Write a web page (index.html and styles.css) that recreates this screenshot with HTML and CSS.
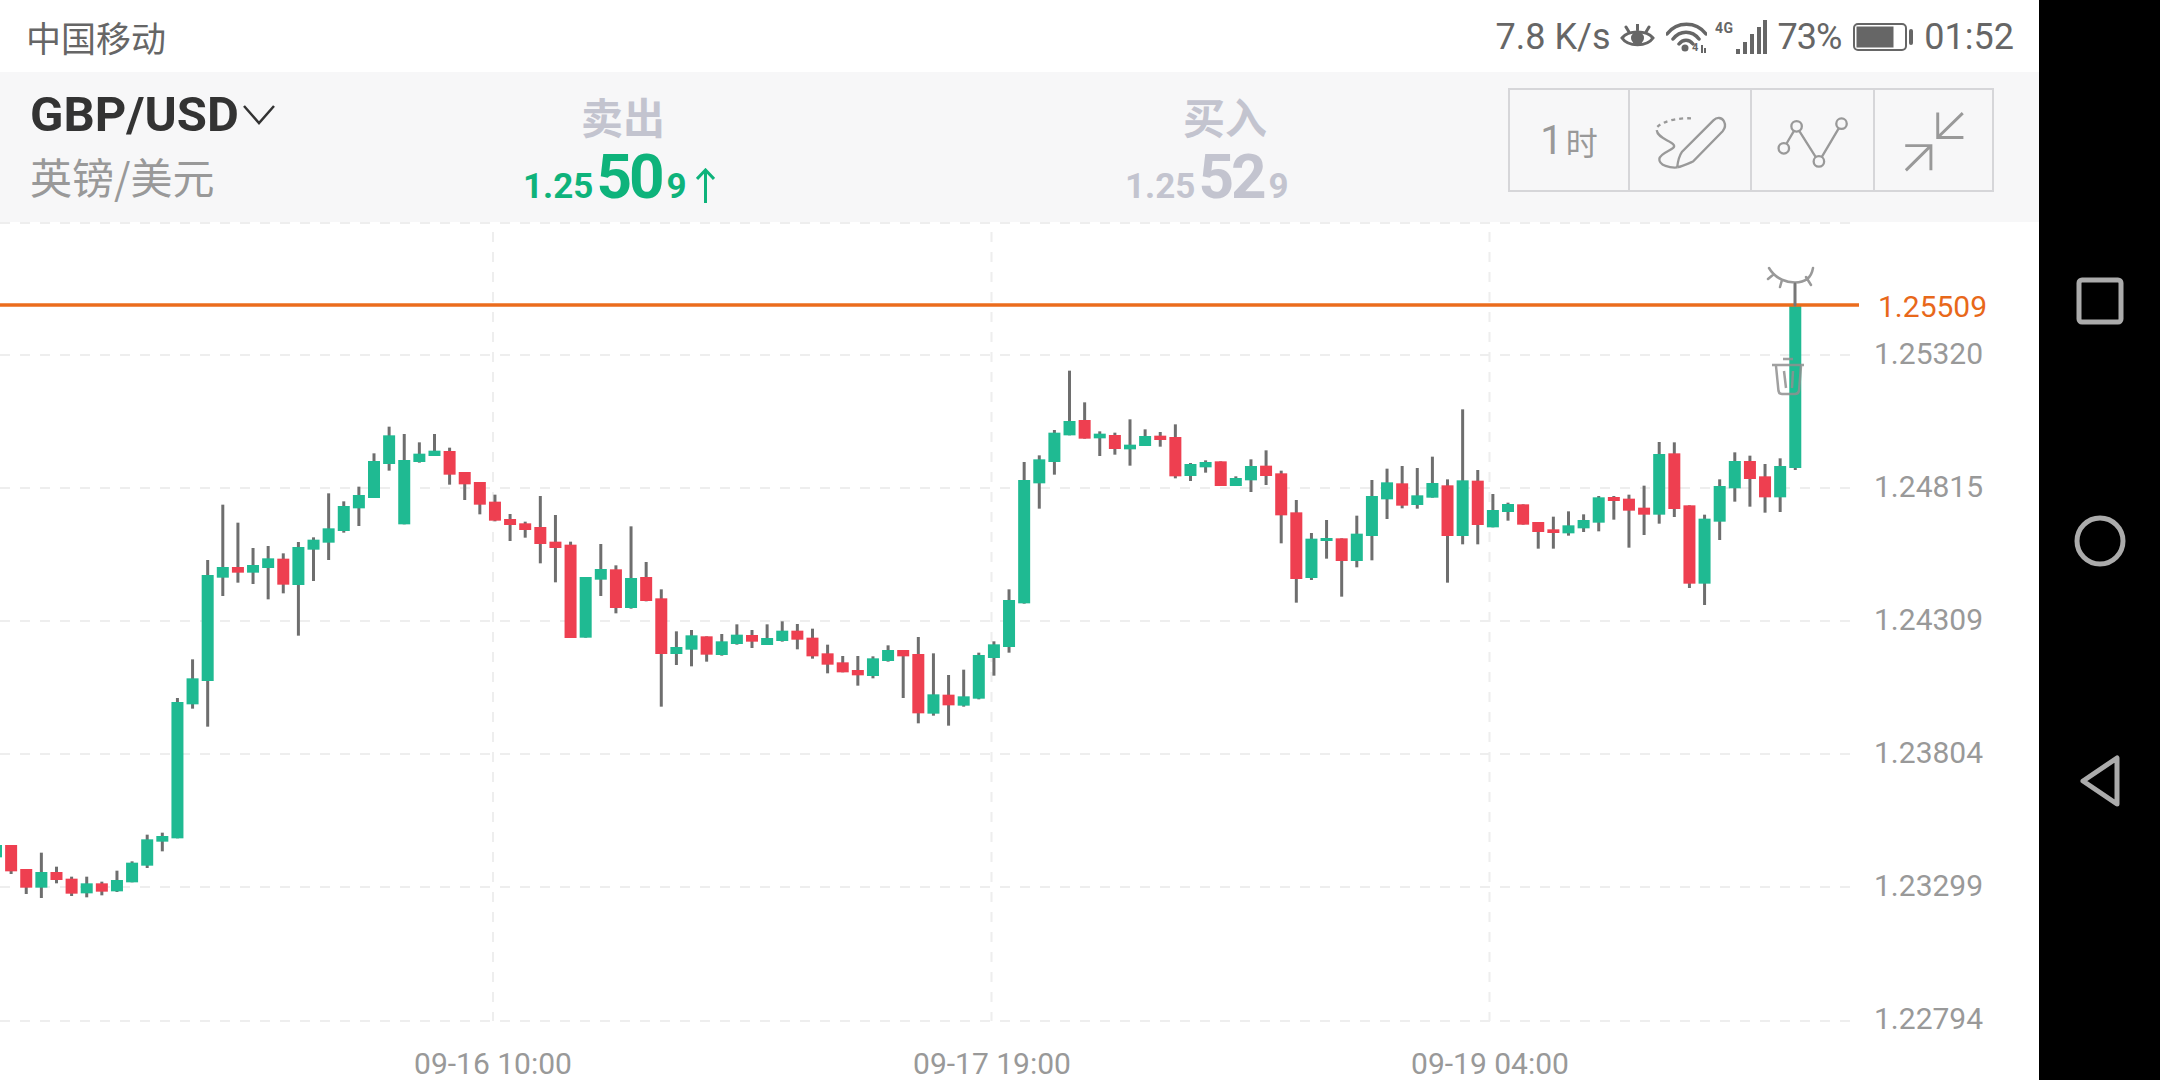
FILE: index.html
```html
<!DOCTYPE html>
<html lang="zh-CN">
<head>
<meta charset="utf-8">
<title>GBP/USD</title>
<link rel="stylesheet" href="styles.css">
</head>
<body>
<div class="phone">
  <main class="screen">
    <header class="status">
      <span class="carrier">中国移动</span>
      <div class="status-right">
        <span class="speed">7.8 K/s</span>
        <svg class="ico-eye" width="35" height="26" viewBox="0 0 35 26"><path class="st" d="M2 14C8 6 27 6 33 14C27 23 8 23 2 14Z"/><circle class="fill" cx="17.500" cy="14" r="6.500"/><path class="st" d="M17.500 0V6M6 3L9 8M29 3L26 8"/></svg>
        <svg class="ico-wifi" width="41" height="32" viewBox="0 0 41 32"><path class="wf" d="M1 13C11 0 30 0 40 13M7 18C14 9 26 9 33 18M13 23C17 18 23 18 27 23"/><circle class="fill" cx="19" cy="27" r="3.500"/><text class="tiny" x="26" y="30">4</text><path class="st-thin" d="M36 32V24M39 32V27"/></svg>
        <svg class="ico-signal" width="53" height="34" viewBox="0 0 53 34"><text class="net" x="0" y="13" textLength="18">4G</text><path class="bars" d="M21 29h4v5h-4zM28 22h4v12h-4zM35 14h4v20h-4zM42 7h4v27h-4zM48 0h4v34h-4z"/></svg>
        <span class="pct">73%</span>
        <svg class="ico-batt" width="61" height="28" viewBox="0 0 61 28"><rect class="batt" x="1" y="1" width="52" height="26" rx="4"/><rect class="fill" x="3.500" y="3.500" width="37" height="21"/><rect class="fill" x="56" y="6" width="4" height="16" rx="2"/></svg>
        <span class="clock">01:52</span>
      </div>
    </header>

    <section class="quotebar">
      <div class="pair">
        <div class="pair-code">GBP/USD<svg class="chev" width="32" height="20" viewBox="0 0 32 20"><path d="M1 1L16 18L31 1"/></svg></div>
        <div class="pair-name">英镑/美元</div>
      </div>
      <div class="quote quote-sell">
        <div class="quote-label">卖出</div>
        <div class="price price-up"><span class="small">1.25</span><span class="big">50</span><span class="small">9</span><svg class="arrow" width="19" height="36" viewBox="0 0 19 36"><path d="M9.500 35V2M1 11L9.500 2L18 11"/></svg></div>
      </div>
      <div class="quote quote-buy">
        <div class="quote-label">买入</div>
        <div class="price price-mute"><span class="small">1.25</span><span class="big">52</span><span class="small">9</span></div>
      </div>
      <div class="tools">
        <div class="tool tool-text"><span class="one">1</span><span class="hour">时</span></div>
        <div class="tool"><svg class="tool-ico" viewBox="387 53 364 309"><path d="M530 288C532 270 538 250 545 240L640 145C650 135 665 135 672 148C678 160 675 170 668 178L578 270C560 278 545 285 530 288"/><path class="dots" d="M572 139C540 137 490 145 470 165"/><path d="M468 175C470 200 510 205 520 220C528 235 480 240 476 262C474 282 510 290 530 288"/></svg></div>
        <div class="tool"><svg class="tool-ico" viewBox="751 53 369 309"><path d="M856 216L879 177M895 177L945 256M964 256L1015 170"/><circle cx="848" cy="230" r="16"/><circle cx="887" cy="163" r="16"/><circle cx="955" cy="270" r="16"/><circle cx="1024" cy="155" r="16"/></svg></div>
        <div class="tool"><svg class="tool-ico tool-ico-bold" viewBox="1120 53 360 309"><path d="M1313 120V197H1392M1313 197L1390 122M1213 222H1292V298M1292 222L1215 298"/></svg></div>
      </div>
    </section>

    <section class="chart">
      <svg id="plot" class="plot" width="2039" height="858" viewBox="0 222 2039 858">
        <g class="grid">
          <path d="M0 223H1850M0 355H1850M0 488H1850M0 621H1850M0 754H1850M0 887H1850M0 1021H1850"/>
          <path d="M493 232V1021M991.500 232V1021M1489.500 232V1021"/>
        </g>
        <g id="candles"></g>
        <path class="last-line" d="M0 305H1859"/>
        <g class="axis">
          <text class="last-label" x="1878" y="317">1.25509</text>
          <text x="1874" y="364">1.25320</text>
          <text x="1874" y="497">1.24815</text>
          <text x="1874" y="630">1.24309</text>
          <text x="1874" y="763">1.23804</text>
          <text x="1874" y="896">1.23299</text>
          <text x="1874" y="1029">1.22794</text>
        </g>
        <g class="times">
          <text x="493" y="1074">09-16 10:00</text>
          <text x="992" y="1074">09-17 19:00</text>
          <text x="1490" y="1074">09-19 04:00</text>
        </g>
        <path class="marker" d="M1769 268C1776 280 1788 282.500 1795 282.500C1802 282.500 1811 280 1813 268M1768 279L1774 274M1780 287L1782 280M1811 285L1806 277"/>
        <path class="marker stem" d="M1795 284V305"/>
        <g class="trash">
          <path d="M1772 365H1804M1783 359H1793M1776 366L1778.500 391Q1779 394 1782 394H1795Q1798 394 1799 391L1801 366M1784 371L1786 388M1793 371L1792 388"/>
        </g>
      </svg>
    </section>
  </main>

  <aside class="navbar">
    <svg class="nav-ico" width="48" height="48" viewBox="0 0 48 48"><rect x="3" y="3" width="42" height="42" rx="3"/></svg>
    <svg class="nav-ico nav-ico-circle" width="52" height="52" viewBox="0 0 52 52"><circle cx="26" cy="26" r="23"/></svg>
    <svg class="nav-ico" width="44" height="52" viewBox="0 0 44 52"><path d="M5 26L39 3V49Z"/></svg>
  </aside>
</div>
<script src="script.js"></script>
</body>
</html>
```

FILE: styles.css
```css
* { box-sizing: border-box; }
html, body { margin: 0; height: 100%; background: #fff; overflow: hidden; }
body { font-family: Roboto, "Noto Sans CJK SC", sans-serif; }

.phone { display: flex; width: 2160px; height: 1080px; }
.screen { width: 2039px; display: flex; flex-direction: column; }

.status {
  height: 72px;
  flex: none;
  display: flex;
  align-items: center;
  justify-content: space-between;
  padding: 1px 25px 0 26px;
  color: #666;
}
.carrier { font: 400 35px/40px "Noto Sans CJK SC", sans-serif; }
.status-right { display: flex; align-items: center; font-size: 36px; line-height: 40px; }
.speed { margin-right: 9px; }
.ico-eye { margin-right: 11px; }
.ico-wifi { margin-right: 8px; }
.ico-signal { margin-right: 10px; }
.pct { margin-right: 12px; letter-spacing: -1px; }
.ico-batt { margin-right: 10px; }
.st { fill: none; stroke: #666; stroke-width: 3; stroke-linecap: round; }
.st-thin { fill: none; stroke: #666; stroke-width: 2; }
.wf { fill: none; stroke: #666; stroke-width: 3.500; stroke-linecap: round; }
.fill { fill: #666; }
.bars { fill: #666; }
.batt { fill: none; stroke: #666; stroke-width: 2; }
.net { font: 700 14px Roboto, sans-serif; fill: #666; }
.tiny { font: 700 11px Roboto, sans-serif; fill: #666; }

.quotebar {
  height: 150px;
  flex: none;
  background: #f7f7f8;
  display: flex;
  padding: 16px 45px 0 30px;
}
.pair { width: 493px; }
.pair-code { font-size: 49px; font-weight: 700; line-height: 54px; color: #333; display: flex; align-items: center; }
.chev { margin-left: 4px; fill: none; stroke: #333; stroke-width: 2.500; }
.pair-name { font: 400 42px/52px "Noto Sans CJK SC", sans-serif; color: #999; margin-top: 8px; }

.quote { width: 602px; }
.quote-buy { width: auto; flex: 1; }
.quote-label { font: 700 42px/46px "Noto Sans CJK SC", sans-serif; color: #c3c4cf; padding-left: 58px; margin-top: 5px; }
.price { display: flex; align-items: baseline; font-weight: 700; margin-top: 8px; height: 60px; }
.price-up { color: #0eb37b; }
.price-mute { color: #c3c4cf; }
.small { font-size: 35px; line-height: 60px; }
.big { font-size: 62px; line-height: 60px; letter-spacing: -3px; margin: 0 5px 0 3px; }
.arrow { margin-left: 9px; align-self: flex-end; margin-bottom: 3px; fill: none; stroke: #0eb37b; stroke-width: 3; }

.tools {
  width: 486px;
  height: 104px;
  flex: none;
  display: grid;
  grid-template-columns: 118px 122px 123px 1fr;
  border: 2px solid #d6d6d9;
}
.tool { border-left: 2px solid #d6d6d9; display: flex; align-items: center; justify-content: center; }
.tool:first-child { border-left: 0; }
.tool-text { color: #999; }
.one { font-size: 40px; line-height: 46px; }
.hour { font: 400 32px/40px "Noto Sans CJK SC", sans-serif; margin-left: 3px; }
.tool-ico { width: 100%; height: 100%; display: block; fill: none; stroke: #999; stroke-width: 7; }
.tool-ico-bold { stroke-width: 9; }
.dots { stroke-dasharray: 12 12; }

.chart { flex: 1; }
.plot { display: block; }
.grid path { fill: none; stroke: #eeeeee; stroke-width: 2; stroke-dasharray: 10 10; }
.wick { stroke: #6e6e6e; stroke-width: 3; }
.body-g { fill: #1fba92; }
.body-r { fill: #ee3f50; }
.last-line { stroke: #eb6c1d; stroke-width: 3.500; fill: none; }
.axis text { font: 400 30px Roboto, sans-serif; fill: #999; }
.axis .last-label { fill: #e8681a; }
.times text { font: 400 30px Roboto, sans-serif; fill: #999; text-anchor: middle; }
.marker { fill: none; stroke: #999; stroke-width: 2.500; stroke-linecap: round; }
.stem { stroke: #777; stroke-width: 3; }
.trash path { fill: none; stroke: #8f8f8f; stroke-width: 2.500; opacity: .85; }

.navbar {
  width: 121px;
  flex: none;
  background: #000;
  display: flex;
  flex-direction: column;
  align-items: center;
  padding-top: 277px;
  gap: 188px;
}
.nav-ico { fill: none; stroke: #ababab; stroke-width: 5; stroke-linejoin: round; flex: none; }
.nav-ico-circle { margin-top: 2px; }
```

FILE: script.js
```js
// Candle data: colour, wick top, body top, body bottom, wick bottom,
// read off at three times scale and relative to a per-segment origin.
var SEGMENTS = [
  [480, "g1095,1095,1132,1132 r1095,1095,1174,1182 r1167,1167,1223,1242 g1118,1176,1223,1254 r1160,1176,1200,1210 r1190,1196,1241,1248 g1190,1210,1240,1252 r1205,1210,1235,1246 g1172,1200,1234,1236 g1144,1148,1207,1207 g1064,1078,1157,1164 g1058,1068,1085,1114 g654,666,1075,1075 g538,595,673,686 g240,285,603,740 g74,261,293,348 r128,261,278,308 g204,255,278,312 g198,235,264,358 r220,236,314,340 g186,201,315,467 g172,179,209,303 g40,145,188,240 g64,78,153,158 g20,45,85,138"],
  [400, "g160,183,294,294 g80,106,192,212 g102,180,373,373 g127,161,186,188 g102,152,168,168 r143,153,224,254 r216,216,253,300 r246,246,314,343 r284,305,362,364 r342,357,375,423 r365,370,390,413 r288,381,432,490 r345,425,444,547 r425,434,714,714 g531,531,713,713 g432,507,539,588 r496,508,624,640 g379,534,624,626 r486,531,603,604 r568,595,762,920"],
  [360, "g814,861,882,915 g810,826,869,919 r829,829,884,905 g822,844,885,887 g793,824,852,854 r810,825,845,864 g793,834,855,855 g784,812,843,845 r792,812,839,868 r806,833,889,896 r854,880,914,940 r888,907,937,937 r888,930,946,977 g889,895,948,955 g856,870,903,905 r870,870,889,1014 r831,882,1060,1090 g880,1003,1061,1067 r945,1004,1036,1097 g929,1009,1037,1040 g878,885,1016,1018 g844,853,894,947 g688,720,861,878 g306,360,730,731 g286,298,370,446 g210,218,306,344 g32,183,226,226 r127,180,236,236 g214,221,235,288 r218,225,267,284 g178,254,268,317"],
  [400, "g88,108,138,138 r96,107,120,140 r73,111,229,235 g189,192,228,243 g181,186,202,218 r184,184,258,258 g229,234,258,258 g178,198,241,276 r151,197,228,255 r212,220,346,430 r300,337,537,608 g399,416,534,540 g360,414,423,476 r415,415,483,590 g347,401,483,502 g240,288,408,481 g206,247,298,357 r198,250,317,325 g204,286,315,326 g170,249,293,293 r238,256,408,548"],
  [400, "g28,241,408,433 r210,242,375,433 g282,330,382,382 g308,312,336,362 r313,313,374,374 r366,366,396,446 r350,388,399,446 g334,376,400,407 g343,360,385,396 g288,292,368,394 r288,291,303,359 r284,296,332,443 r257,323,344,405 g126,162,344,371 r127,160,327,351 r316,316,551,564 g344,356,551,615 g238,258,365,420 g157,183,265,305 r167,183,237,320 r192,229,292,338 g175,198,292,336 g-282,-282,204,210"]
];

var NS = "http://www.w3.org/2000/svg";
var host = document.getElementById("candles");
var index = 0;

function make(tag, attrs) {
  var el = document.createElementNS(NS, tag);
  for (var k in attrs) el.setAttribute(k, attrs[k]);
  return el;
}

SEGMENTS.forEach(function (segment) {
  var origin = segment[0];
  segment[1].split(" ").forEach(function (row) {
    var colour = row.charAt(0);
    var v = row.slice(1).split(",").map(function (n) { return origin + Number(n) / 3; });
    var x = -4 + 15.12 * index;
    if (v[3] - v[0] > 0) {
      host.appendChild(make("line", { "class": "wick", x1: x, x2: x, y1: v[0], y2: v[3] }));
    }
    host.appendChild(make("rect", {
      "class": colour === "g" ? "body-g" : "body-r",
      x: x - 6, y: v[1], width: 12, height: Math.max(v[2] - v[1], 3)
    }));
    index += 1;
  });
});
```
